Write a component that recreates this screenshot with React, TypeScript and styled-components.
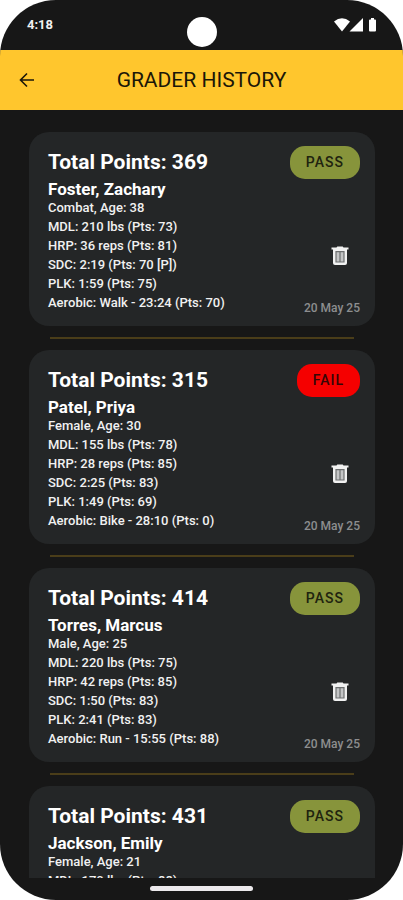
import React from 'react';
import styled, { createGlobalStyle } from 'styled-components';

type Result = 'PASS' | 'FAIL';

interface GradeRecord {
  total: number;
  name: string;
  lines: string[];
  result: Result;
  date?: string;
}

const records: GradeRecord[] = [
  {
    total: 369,
    name: 'Foster, Zachary',
    lines: [
      'Combat, Age: 38',
      'MDL: 210 lbs (Pts: 73)',
      'HRP: 36 reps (Pts: 81)',
      'SDC: 2:19 (Pts: 70 [P])',
      'PLK: 1:59 (Pts: 75)',
      'Aerobic: Walk - 23:24 (Pts: 70)',
    ],
    result: 'PASS',
    date: '20 May 25',
  },
  {
    total: 315,
    name: 'Patel, Priya',
    lines: [
      'Female, Age: 30',
      'MDL: 155 lbs (Pts: 78)',
      'HRP: 28 reps (Pts: 85)',
      'SDC: 2:25 (Pts: 83)',
      'PLK: 1:49 (Pts: 69)',
      'Aerobic: Bike - 28:10 (Pts: 0)',
    ],
    result: 'FAIL',
    date: '20 May 25',
  },
  {
    total: 414,
    name: 'Torres, Marcus',
    lines: [
      'Male, Age: 25',
      'MDL: 220 lbs (Pts: 75)',
      'HRP: 42 reps (Pts: 85)',
      'SDC: 1:50 (Pts: 83)',
      'PLK: 2:41 (Pts: 83)',
      'Aerobic: Run - 15:55 (Pts: 88)',
    ],
    result: 'PASS',
    date: '20 May 25',
  },
  {
    total: 431,
    name: 'Jackson, Emily',
    lines: ['Female, Age: 21', 'MDL: 170 lbs (Pts: 88)'],
    result: 'PASS',
  },
];

const GlobalStyle = createGlobalStyle`
  *, *::before, *::after { box-sizing: border-box; }
  body {
    margin: 0;
    background: #ffffff;
    font-family: Roboto, sans-serif;
  }
`;

const Screen = styled.div`
  display: flex;
  flex-direction: column;
  height: 100vh;
  overflow: hidden;
  border-radius: 56px;
  background: #171717;
  color: #f1f1f1;
`;

const StatusBar = styled.div`
  flex: none;
  display: grid;
  grid-template-columns: 1fr auto 1fr;
  height: 50px;
  padding: 0 26px 0 27px;
`;

const Clock = styled.time`
  padding-top: 16px;
  font-size: 13px;
  line-height: 18px;
  font-weight: 700;
`;

const Camera = styled.span`
  width: 30px;
  height: 30px;
  margin-top: 17px;
  border-radius: 50%;
  background: #ffffff;
`;

const StatusIcons = styled.svg`
  justify-self: end;
  margin-top: 17px;
  width: 44px;
  height: 16px;
  fill: #ffffff;
`;

const AppBar = styled.header`
  flex: none;
  display: grid;
  grid-template-columns: 54px 1fr 54px;
  align-items: center;
  height: 60px;
  background: #ffc62d;
  color: #1b1708;
`;

const IconButton = styled.button`
  display: grid;
  place-items: center;
  padding: 0;
  border: 0;
  background: none;
  color: inherit;
  cursor: pointer;
`;

const BackButton = styled(IconButton)`
  height: 60px;
`;

const Title = styled.h1`
  margin: 0;
  font-size: 21px;
  line-height: 24px;
  font-weight: 400;
  text-align: center;
`;

const List = styled.main`
  flex: 1;
  min-height: 0;
  overflow-y: auto;
  scrollbar-width: none;
  padding: 22px 28px 0 29px;
`;

const Card = styled.article`
  display: flex;
  justify-content: space-between;
  min-height: 194px;
  padding: 14px 15px 10px 19px;
  border-radius: 20px;
  background: #242627;
`;

const Divider = styled.hr`
  height: 2px;
  margin: 11px 21px;
  border: 0;
  background: #4a3d19;
`;

const Details = styled.div`
  min-width: 0;
`;

const Total = styled.h2`
  margin: 0 0 2px;
  font-size: 21px;
  line-height: 32px;
  font-weight: 700;
  color: #ffffff;
`;

const Name = styled.h3`
  margin: 0;
  font-size: 17px;
  line-height: 18px;
  font-weight: 700;
  color: #ffffff;
`;

const Line = styled.p`
  margin: 0;
  font-size: 13px;
  line-height: 19px;
  font-weight: 500;
`;

const Side = styled.div`
  display: flex;
  flex-direction: column;
  align-items: flex-end;
`;

const Badge = styled.span<{ $result: Result }>`
  padding: 0 16px;
  border-radius: 15px;
  font-size: 14px;
  line-height: 33px;
  font-weight: 500;
  letter-spacing: 1px;
  background: ${({ $result }) => ($result === 'PASS' ? '#87943b' : '#f50000')};
  color: ${({ $result }) => ($result === 'PASS' ? '#20230f' : '#350606')};
`;

const DeleteButton = styled(IconButton)`
  width: 24px;
  height: 24px;
  margin: 65px 8px auto 0;
`;

const DateLabel = styled.time`
  font-size: 12px;
  line-height: 16px;
  font-weight: 500;
  color: #8d8e8f;
`;

const NavBar = styled.footer`
  flex: none;
  display: flex;
  justify-content: center;
  height: 22px;
  padding-top: 8px;
`;

const HomeHandle = styled.span`
  width: 103px;
  height: 5px;
  border-radius: 3px;
  background: #ece9ec;
`;

const BackIcon = () => (
  <svg width="16" height="16" viewBox="0 0 16 16" fill="none" stroke="currentColor" strokeWidth="1.6" aria-hidden="true">
    <path d="M15 8H2M8 1.5L1.5 8L8 14.5" />
  </svg>
);

const TrashIcon = () => (
  <svg width="24" height="24" viewBox="0 0 24 24" aria-hidden="true">
    <path fill="#f1f1f1" d="M3.5 3.5H8.5L9.3 2.6H14.7L15.5 3.5H20.5V5.5H3.5Z" />
    <path fill="#f1f1f1" d="M5 5H19V19Q19 21 17 21H7Q5 21 5 19Z" />
    <path fill="#6d6f70" d="M7.4 7H16.6V18.5H7.4Z" />
    <path fill="#c4c5c6" d="M8.6 8.2H11.4V17.4H8.6ZM12.6 8.2H15.4V17.4H12.6Z" />
  </svg>
);

const ResultCard = ({ record }: { record: GradeRecord }) => (
  <Card>
    <Details>
      <Total>Total Points: {record.total}</Total>
      <Name>{record.name}</Name>
      {record.lines.map((line) => (
        <Line key={line}>{line}</Line>
      ))}
    </Details>
    <Side>
      <Badge $result={record.result}>{record.result}</Badge>
      <DeleteButton type="button" aria-label={`Delete ${record.name}`}>
        <TrashIcon />
      </DeleteButton>
      {record.date && <DateLabel>{record.date}</DateLabel>}
    </Side>
  </Card>
);

export default function App() {
  return (
    <>
      <GlobalStyle />
      <Screen>
        <StatusBar>
          <Clock>4:18</Clock>
          <Camera />
          <StatusIcons viewBox="0 0 44 16" aria-hidden="true">
            <path d="M1 4.5Q9 -2 17 4.5L9 14.5Z" />
            <path d="M30 1V14.5H16.5Z" />
            <path d="M37 2.5H38V1H41V2.5H42Q43 2.5 43 3.5V13.5Q43 14.5 42 14.5H37Q36 14.5 36 13.5V3.5Q36 2.5 37 2.5Z" />
          </StatusIcons>
        </StatusBar>
        <AppBar>
          <BackButton type="button" aria-label="Back">
            <BackIcon />
          </BackButton>
          <Title>GRADER HISTORY</Title>
        </AppBar>
        <List>
          {records.map((record, index) => (
            <React.Fragment key={record.name}>
              {index > 0 && <Divider />}
              <ResultCard record={record} />
            </React.Fragment>
          ))}
        </List>
        <NavBar>
          <HomeHandle />
        </NavBar>
      </Screen>
    </>
  );
}
